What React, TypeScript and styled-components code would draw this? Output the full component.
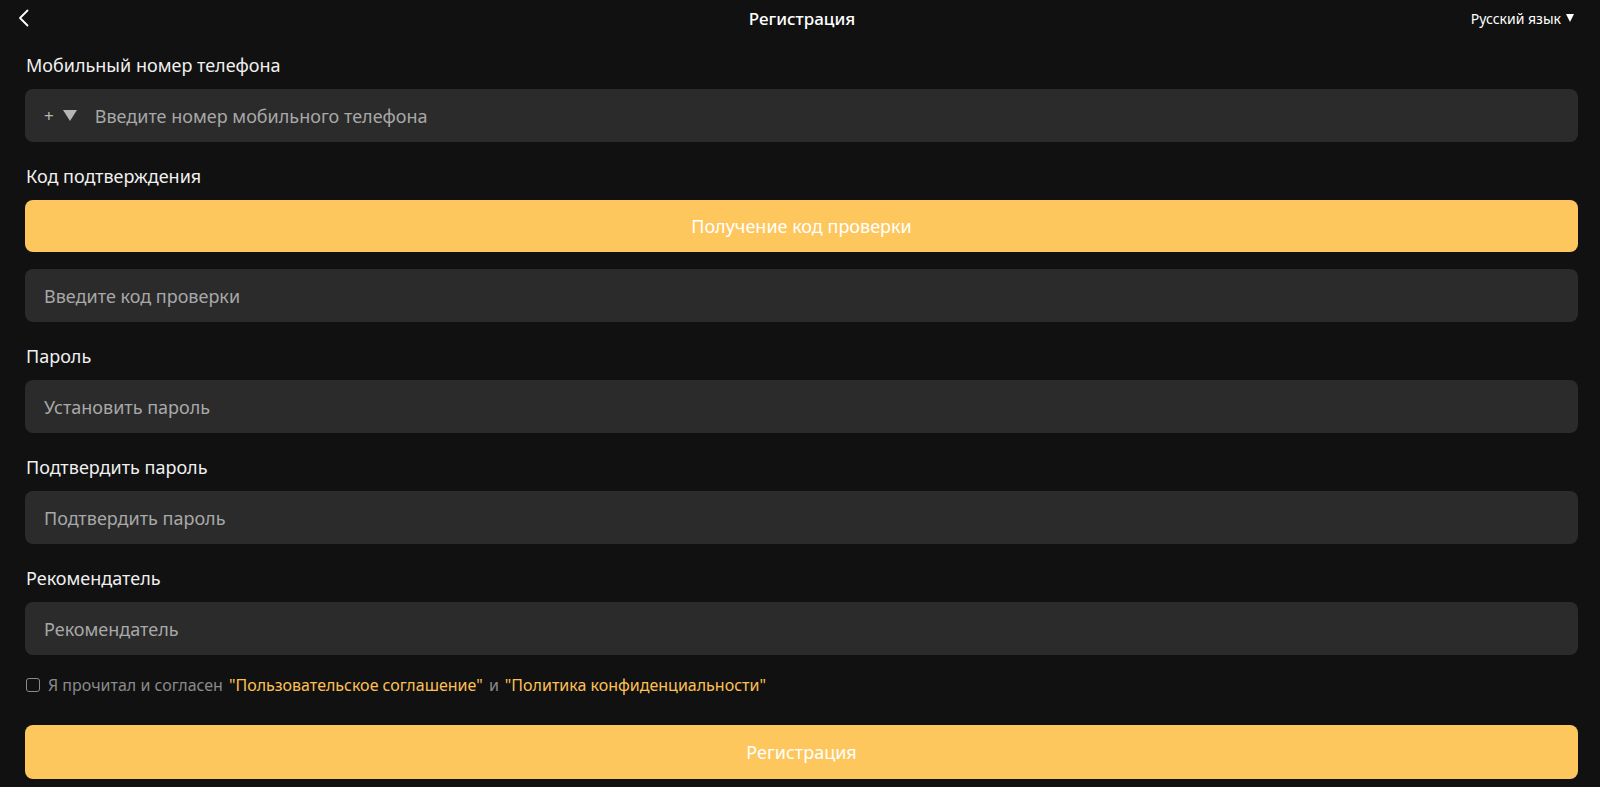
import React from "react";
import styled, { createGlobalStyle } from "styled-components";

const Global = createGlobalStyle`
  html, body { margin: 0; padding: 0; background: #111111; }
  body { font-family: "Noto Sans", "Open Sans", sans-serif; color: #f2f2f2; }
  * { box-sizing: border-box; }
`;

const Page = styled.div`
  width: 1600px;
  min-height: 787px;
  background: #111111;
  display: flex;
  flex-direction: column;
`;

const Header = styled.header`
  height: 36px;
  display: grid;
  grid-template-columns: 1fr auto 1fr;
  align-items: center;
  padding: 0 26px 0 18px;
`;

const BackButton = styled.button`
  background: none;
  border: 0;
  padding: 0;
  width: 14px;
  height: 20px;
  display: flex;
  align-items: center;
  cursor: pointer;
  justify-self: start;
`;

const Title = styled.h1`
  margin: 0;
  padding-left: 12px;
  font-size: 17px;
  font-weight: 500;
  color: #ffffff;
`;

const Lang = styled.div`
  justify-self: end;
  display: flex;
  align-items: center;
  gap: 5px;
  font-size: 14px;
  color: #ffffff;
`;

const SmallTri = styled.span`
  width: 0;
  height: 0;
  border-left: 4.5px solid transparent;
  border-right: 4.5px solid transparent;
  border-top: 8px solid #ffffff;
`;

const Form = styled.form`
  display: flex;
  flex-direction: column;
  padding: 17px 22px 0 25px;
`;

const Group = styled.div`
  display: flex;
  flex-direction: column;
  gap: 12px;
  margin-bottom: 22px;
`;

const Label = styled.label`
  font-size: 18px;
  line-height: 24px;
  color: #f0f0f0;
  padding-left: 1px;
`;

const Field = styled.div`
  height: 53px;
  background: #2b2b2b;
  border-radius: 8px;
  display: flex;
  align-items: center;
  padding: 0 19px;
  gap: 8px;
`;

const Input = styled.input`
  flex: 1;
  background: transparent;
  border: 0;
  outline: none;
  font-family: inherit;
  font-size: 18px;
  color: #eeeeee;
  padding: 0;
  &::placeholder { color: #a8a8a8; }
`;

const Prefix = styled.span`
  display: flex;
  align-items: center;
  gap: 9px;
  color: #b5b5b5;
  font-size: 17px;
  margin-right: 10px;
`;

const PrefixTri = styled.span`
  width: 0;
  height: 0;
  border-left: 7px solid transparent;
  border-right: 7px solid transparent;
  border-top: 11px solid #b5b5b5;
`;

const Stack = styled.div`
  display: flex;
  flex-direction: column;
  gap: 17px;
`;

const YellowButton = styled.button<{ $h?: number }>`
  height: ${(p) => p.$h ?? 52}px;
  border: 0;
  border-radius: 8px;
  background: #fec75e;
  color: #ffffff;
  font-family: inherit;
  font-size: 18px;
  cursor: pointer;
  width: 100%;
`;

const Agree = styled.div`
  display: flex;
  align-items: center;
  gap: 6px;
  height: 16px;
  margin-top: 0;
  margin-bottom: 32px;
  font-size: 16px;
  color: #8a8a8a;
`;

const Check = styled.input`
  appearance: none;
  width: 14px;
  height: 14px;
  margin: 0 2px 0 1px;
  border: 1.5px solid #8a8a8a;
  border-radius: 3px;
  background: transparent;
`;

const Link = styled.a`
  color: #fdc055;
  text-decoration: none;
`;

const fields = [
  { label: "Пароль", ph: "Установить пароль", type: "password" },
  { label: "Подтвердить пароль", ph: "Подтвердить пароль", type: "password" },
  { label: "Рекомендатель", ph: "Рекомендатель", type: "text" },
];

export default function App() {
  return (
    <Page>
      <Global />
      <Header>
        <BackButton type="button" aria-label="back">
          <svg width="11" height="18" viewBox="0 0 11 18" fill="none">
            <path d="M9.5 1.5 L2 9 L9.5 16.5" stroke="#ffffff" strokeWidth="1.8" strokeLinecap="round" strokeLinejoin="round" />
          </svg>
        </BackButton>
        <Title>Регистрация</Title>
        <Lang>
          Русский язык
          <SmallTri />
        </Lang>
      </Header>
      <Form onSubmit={(e) => e.preventDefault()}>
        <Group>
          <Label>Мобильный номер телефона</Label>
          <Field>
            <Prefix>
              +
              <PrefixTri />
            </Prefix>
            <Input placeholder="Введите номер мобильного телефона" />
          </Field>
        </Group>
        <Group>
          <Label>Код подтверждения</Label>
          <Stack>
            <YellowButton type="button">Получение код проверки</YellowButton>
            <Field>
              <Input placeholder="Введите код проверки" />
            </Field>
          </Stack>
        </Group>
        {fields.map((f) => (
          <Group key={f.label}>
            <Label>{f.label}</Label>
            <Field>
              <Input type={f.type} placeholder={f.ph} />
            </Field>
          </Group>
        ))}
        <Agree>
          <Check type="checkbox" />
          <span>Я прочитал и согласен</span>
          <Link href="#">"Пользовательское соглашение"</Link>
          <span>и</span>
          <Link href="#">"Политика конфиденциальности"</Link>
        </Agree>
        <YellowButton $h={54} type="submit">Регистрация</YellowButton>
      </Form>
    </Page>
  );
}
